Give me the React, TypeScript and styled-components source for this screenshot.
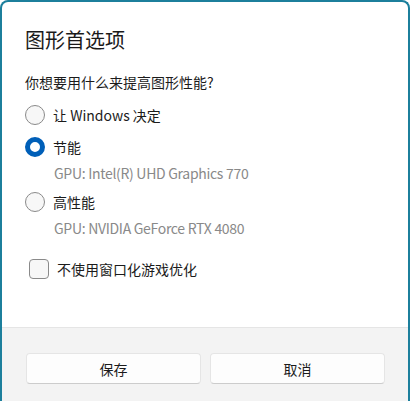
import * as React from 'react';
import styled, { createGlobalStyle } from 'styled-components';

const GlobalStyle = createGlobalStyle`
    html, body {
        margin: 0;
        padding: 0;
        background: #ffffff;
    }
    body {
        font-family: "Noto Sans CJK SC", "Noto Sans", sans-serif;
        color: #1b1b1b;
    }
`;

const Dialog = styled.div`
    box-sizing: border-box;
    width: 410px;
    height: 401px;
    display: flex;
    flex-direction: column;
    border: 2px solid #1c7f9c;
    border-bottom: none;
    border-radius: 8px 8px 0 0;
    overflow: hidden;
    background: #ffffff;
`;

const Content = styled.div`
    flex: 1;
    padding: 24px 24px 0 23px;
    display: flex;
    flex-direction: column;
`;

const Title = styled.h1`
    margin: 0;
    font-size: 20px;
    line-height: 28px;
    font-weight: 400;
    color: #1a1a1a;
`;

const Question = styled.p`
    margin: 18px 0 7px;
    font-size: 14px;
    line-height: 20px;
`;

const OptionRow = styled.label`
    display: flex;
    align-items: center;
    height: 32px;
    font-size: 14px;
    cursor: default;
`;

const RadioMark = styled.span<{ checked?: boolean }>`
    box-sizing: border-box;
    width: 20px;
    height: 20px;
    border-radius: 50%;
    margin-right: 8px;
    flex-shrink: 0;
    border: ${p => (p.checked ? '5px solid #005fb8' : '1px solid #8a8a8a')};
    background: ${p => (p.checked ? '#ffffff' : '#f7f7f7')};
`;

const Sub = styled.div`
    padding-left: 29px;
    margin-bottom: 3px;
    font-size: 14px;
    line-height: 20px;
    letter-spacing: -0.3px;
    color: #898989;
`;

const CheckRow = styled(OptionRow)`
    margin-top: 12px;
    padding-left: 4px;
`;

const CheckMark = styled.span`
    box-sizing: border-box;
    width: 20px;
    height: 20px;
    border-radius: 4px;
    border: 1px solid #8a8a8a;
    background: #f7f7f7;
    margin-right: 8px;
`;

const Footer = styled.div`
    height: 74px;
    box-sizing: border-box;
    border-top: 1px solid #e5e5e5;
    background: #f3f3f3;
    padding: 25px 23px 0 24px;
    display: grid;
    grid-template-columns: 1fr 1fr;
    column-gap: 9px;
    align-items: start;
`;

const Button = styled.button`
    height: 31px;
    border: 1px solid #e5e5e5;
    border-bottom-color: #cccccc;
    border-radius: 4px;
    background: #fdfdfd;
    font-family: "Noto Sans CJK SC", sans-serif;
    font-size: 14px;
    color: #1b1b1b;
`;

const options = [
    { label: '让 Windows 决定', gpu: '' },
    { label: '节能', gpu: 'GPU: Intel(R) UHD Graphics 770' },
    { label: '高性能', gpu: 'GPU: NVIDIA GeForce RTX 4080' },
];

const App: React.FunctionComponent = () => {
    const [selected, setSelected] = React.useState(1);
    const [noWindowed, setNoWindowed] = React.useState(false);

    return (
        <>
            <GlobalStyle />
            <Dialog>
                <Content>
                    <Title>图形首选项</Title>
                    <Question>你想要用什么来提高图形性能?</Question>
                    {options.map((o, i) => (
                        <React.Fragment key={o.label}>
                            <OptionRow onClick={() => setSelected(i)}>
                                <RadioMark checked={selected === i} />
                                {o.label}
                            </OptionRow>
                            {o.gpu && <Sub>{o.gpu}</Sub>}
                        </React.Fragment>
                    ))}
                    <CheckRow onClick={() => setNoWindowed(!noWindowed)}>
                        <CheckMark />
                        不使用窗口化游戏优化
                    </CheckRow>
                </Content>
                <Footer>
                    <Button>保存</Button>
                    <Button>取消</Button>
                </Footer>
            </Dialog>
        </>
    );
};

export default App;
